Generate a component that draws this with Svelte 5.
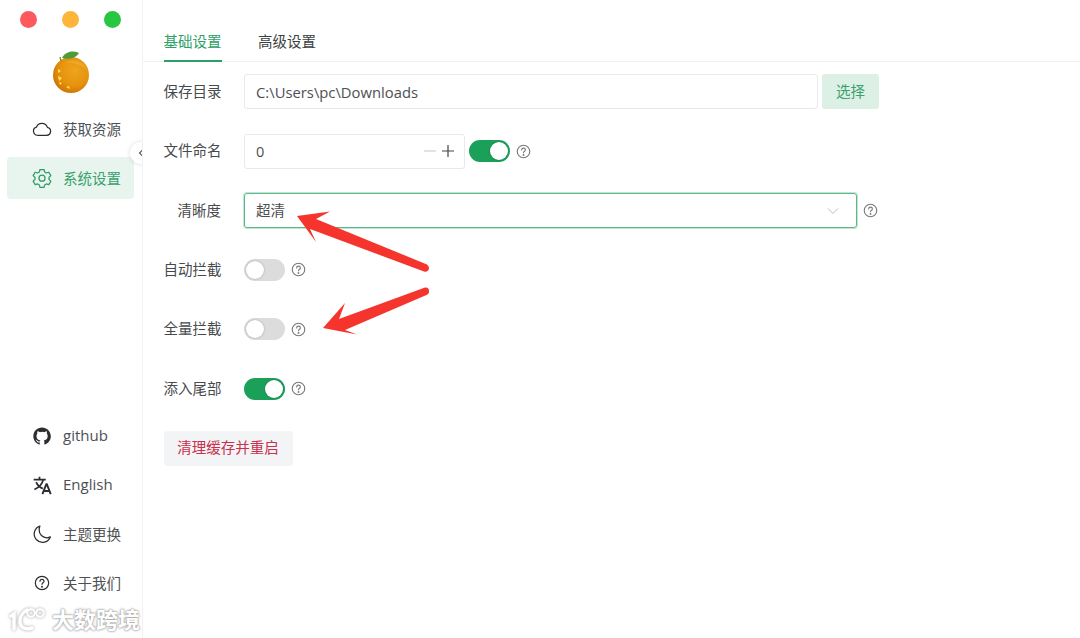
<script>
  const topMenu = [
    { label: '获取资源', icon: 'cloud' },
    { label: '系统设置', icon: 'gear', active: true }
  ];
  const bottomMenu = [
    { label: 'github', icon: 'github', latin: true },
    { label: 'English', icon: 'lang', latin: true },
    { label: '主题更换', icon: 'moon' },
    { label: '关于我们', icon: 'help' }
  ];
</script>

{#snippet icon(name)}
  {#if name === 'cloud'}
    <svg class="ico" viewBox="0 0 24 24" fill="none" stroke="currentColor" stroke-width="1.5"><path d="M6.500 19.500h11a4.800 4.800 0 0 0 1-9.500A7 7 0 0 0 5.400 9.700 5 5 0 0 0 6.500 19.500z" stroke-linejoin="round"/></svg>
  {:else if name === 'gear'}
    <svg class="ico" viewBox="0 0 24 24" fill="none" stroke="currentColor" stroke-width="1.500" stroke-linejoin="round"><path d="M9.600 1.800h4.800l.8 3 2 1.200 3-.9 2.400 4.100-2.200 2.200v2.300l2.200 2.200-2.400 4.100-3-.9-2 1.200-.8 3H9.600l-.8-3-2-1.200-3 .9-2.400-4.100 2.200-2.200v-2.300L1.400 9.200l2.400-4.100 3 .9 2-1.200z"/><circle cx="12" cy="12.200" r="3.600"/></svg>
  {:else if name === 'github'}
    <svg class="ico" viewBox="0 0 24 24" fill="currentColor"><path d="M12 1.800C6.200 1.800 1.600 6.400 1.600 12.200c0 4.600 3 8.500 7.100 9.900.5.100.7-.2.700-.5v-1.900c-2.900.6-3.500-1.200-3.500-1.200-.5-1.200-1.200-1.500-1.200-1.500-.9-.6.100-.6.100-.6 1 .1 1.600 1.100 1.600 1.100.9 1.600 2.400 1.100 3 .9.100-.7.400-1.100.7-1.400-2.300-.3-4.700-1.200-4.700-5.100 0-1.100.4-2 1.100-2.800-.1-.3-.5-1.300.1-2.800 0 0 .9-.3 2.900 1.100a10 10 0 0 1 5.200 0c2-1.400 2.900-1.100 2.900-1.100.6 1.500.2 2.500.1 2.800.7.800 1.100 1.700 1.100 2.800 0 4-2.400 4.800-4.700 5.100.4.300.7 1 .7 1.900v2.800c0 .3.2.6.7.5 4.100-1.400 7.100-5.300 7.100-9.900C22.400 6.400 17.800 1.800 12 1.800z"/></svg>
  {:else if name === 'lang'}
    <svg class="ico" viewBox="0 0 24 24" fill="none" stroke="currentColor" stroke-width="2.100"><path d="M2 5.500h14.500M9 2v3.500M13.500 5.500c-1 4.800-4.900 9.200-10.600 12M5 8.500c1.500 3.600 4.600 6.400 8 7.800"/><path d="M12.500 23l4.700-12h.6l4.700 12M14 19.200h7" stroke-width="2.300"/></svg>
  {:else if name === 'moon'}
    <svg class="ico" viewBox="0 0 24 24" fill="none" stroke="currentColor" stroke-width="1.500" stroke-linejoin="round"><path d="M9.500 2.500A10 10 0 1 0 22 15.500c-1.300.7-2.500 1-4 1A9.200 9.200 0 0 1 8.600 7.200c0-1.700.3-3.200.9-4.700z"/></svg>
  {:else if name === 'help'}
    <svg class="ico small" viewBox="0 0 24 24" fill="none" stroke="currentColor" stroke-width="1.800" stroke-linecap="round"><circle cx="12" cy="12" r="10"/><path d="M9 9.500a3 3 0 0 1 6 0c0 2-3 2.300-3 4.500"/><circle cx="12" cy="17.500" r=".6" fill="currentColor"/></svg>
  {/if}
{/snippet}

{#snippet hint()}
  <svg class="hint" viewBox="0 0 24 24" fill="none" stroke="currentColor" stroke-width="1.800" stroke-linecap="round"><circle cx="12" cy="12" r="10"/><path d="M9 9.500a3 3 0 0 1 6 0c0 2-3 2.300-3 4.500"/><circle cx="12" cy="17.500" r=".6" fill="currentColor"/></svg>
{/snippet}

<div class="app">
  <aside class="side">
    <div class="lights">
      <span class="light red"></span>
      <span class="light amber"></span>
      <span class="light green"></span>
    </div>
    <svg class="logo" viewBox="0 0 40 46" aria-hidden="true">
      <defs>
        <radialGradient id="orange" cx="0.6" cy="0.38" r="0.7">
          <stop offset="0" stop-color="#eea51e"/>
          <stop offset="0.6" stop-color="#e6920c"/>
          <stop offset="1" stop-color="#c96f05"/>
        </radialGradient>
      </defs>
      <circle cx="20" cy="26" r="18" fill="url(#orange)"/>
      <path d="M13 14c8-5 21-3 23 8-4-6-14-9-23-8z" fill="#f6bf45" opacity=".35"/>
      <path d="M11 9c3-6 10-8 17-5-3 5-10 7-17 5z" fill="#4f9a3a"/>
      <path d="M10 12l-1-4" stroke="#7d8a3a" stroke-width="1.300"/>
      <path d="M7 20l3 2-3 2zM7 27l4 2-3 3zM8 33l3 1-2 2zM15 38l3-1 1 3z" fill="#fbe35a"/>
    </svg>
    <nav class="menu top">
      {#each topMenu as item}
        <div class="item" class:active={item.active}>
          {@render icon(item.icon)}
          <span>{item.label}</span>
        </div>
      {/each}
    </nav>
    <span class="collapse">
      <svg viewBox="0 0 8 10" width="6" height="8" fill="none" stroke="#555" stroke-width="1.600"><path d="M6 1L2 5l4 4"/></svg>
    </span>
    <nav class="menu bottom">
      {#each bottomMenu as item}
        <div class="item" class:wide={item.latin}>
          {@render icon(item.icon)}
          <span>{item.label}</span>
        </div>
      {/each}
    </nav>
  </aside>

  <main class="main">
    <div class="tabs">
      <div class="tab current">基础设置</div>
      <div class="tab">高级设置</div>
    </div>
    <div class="form">
      <div class="row">
        <label>保存目录</label>
        <div class="input grow"><span class="latin">C:\Users\pc\Downloads</span></div>
        <button class="pick">选择</button>
      </div>
      <div class="row">
        <label>文件命名</label>
        <div class="input number">
          <span>0</span>
          <span class="steps">
            <svg viewBox="0 0 14 14" width="14" height="14" stroke="#c8cacc" stroke-width="1.100"><path d="M1 7h12"/></svg>
            <svg viewBox="0 0 14 14" width="14" height="14" stroke="#444" stroke-width="1.200"><path d="M1 7h12M7 1v12"/></svg>
          </span>
        </div>
        <span class="switch on"></span>
        {@render hint()}
      </div>
      <div class="row">
        <label>清晰度</label>
        <div class="input select">
          <span class="cjk">超清</span>
          <svg viewBox="0 0 12 8" width="12" height="8" fill="none" stroke="#b9bcbf" stroke-width="1"><path d="M1 1.500l5 5 5-5"/></svg>
        </div>
        {@render hint()}
      </div>
      <div class="row">
        <label>自动拦截</label>
        <span class="switch"></span>
        {@render hint()}
      </div>
      <div class="row">
        <label>全量拦截</label>
        <span class="switch"></span>
        {@render hint()}
      </div>
      <div class="row">
        <label>添入尾部</label>
        <span class="switch on"></span>
        {@render hint()}
      </div>
      <div class="row">
        <button class="clear">清理缓存并重启</button>
      </div>
    </div>
  </main>

  <svg class="arrows" viewBox="0 0 1080 638" aria-hidden="true">
    <path d="M297 216L330 211.500 316 219 427 264.500Q430 267 428.500 270 427 272.500 424 271.500L310 229 316 242z" fill="#f5352d"/>
    <path d="M323 328L345 303 339 319 425 287.500Q428.500 287 429 290.500 429.500 293.500 426.500 295L345 330 357 334.500z" fill="#f5352d"/>
  </svg>

  <div class="mark">
    <svg viewBox="0 0 45 28" width="45" height="28" fill="none" stroke="#fff" stroke-width="3.500" stroke-linecap="round">
      <path d="M4 12l3-2v15" />
      <path d="M20 6c-5 3-8 8-7 13 1 5 6 7 12 5" />
      <circle cx="24" cy="9" r="3.800" stroke-width="2"/>
      <circle cx="33" cy="9" r="3.800" stroke-width="2"/>
    </svg>
    <span>大数跨境</span>
  </div>
</div>

<style>
  :global(body) {
    margin: 0;
    background: #fff;
    font-family: "Open Sans", "Noto Sans CJK SC", sans-serif;
    color: #474a4d;
  }
  .app {
    position: relative;
    display: flex;
    width: 1080px;
    height: 638px;
    overflow: hidden;
    background: #fff;
    font-size: 14.5px;
  }
  .side {
    position: relative;
    box-sizing: border-box;
    flex: 0 0 143px;
    height: 638px;
    padding: 11px 8px 0 7px;
    display: flex;
    flex-direction: column;
    border-right: 1px solid #eff1f2;
    overflow: hidden;
  }
  .lights {
    display: flex;
    gap: 25px;
    padding-left: 13px;
    height: 17px;
  }
  .light {
    width: 17px;
    height: 17px;
    border-radius: 50%;
  }
  .red { background: #fc5a5d; }
  .amber { background: #fdb53a; }
  .green { background: #29c641; }
  .logo {
    display: block;
    width: 40px;
    height: 46px;
    margin: 21px 0 0 44px;
    flex: none;
  }
  .menu {
    display: flex;
    flex-direction: column;
    gap: 7px;
  }
  .top { margin-top: 13px; }
  .bottom { margin-top: auto; margin-bottom: 34px; }
  .item {
    display: flex;
    align-items: center;
    gap: 11px;
    height: 42px;
    padding-left: 25px;
    border-radius: 4px;
    color: #4d5053;
  }
  .item span { padding-bottom: 2px; }
  .item.wide { font-size: 15px; }
  .item.active {
    background: #e7f5ee;
    color: #3aa06c;
  }
  .ico {
    width: 20px;
    height: 20px;
    flex: none;
    color: #2b2d30;
  }
  .ico.small {
    width: 16px;
    height: 16px;
    margin: 0 2px;
  }
  .active .ico { color: #2f9a63; }
  .collapse {
    position: absolute;
    left: 130px;
    top: 142px;
    width: 22px;
    height: 22px;
    border-radius: 50%;
    background: #fff;
    box-shadow: 0 0 5px rgba(0, 0, 0, 0.14);
    display: flex;
    align-items: center;
    justify-content: center;
  }
  .main {
    flex: 1;
    min-width: 0;
  }
  .tabs {
    box-sizing: border-box;
    display: flex;
    gap: 36.5px;
    height: 62px;
    padding-left: 20.5px;
    border-bottom: 1px solid #eff1f2;
  }
  .tab {
    box-sizing: border-box;
    height: 62px;
    padding-top: 31px;
    line-height: 22px;
    color: #3c3f42;
  }
  .tab.current {
    color: #2f9f68;
    border-bottom: 2px solid #2f9f68;
  }
  .form {
    display: flex;
    flex-direction: column;
    gap: 24.4px;
    padding: 12.3px 0 0 20.5px;
  }
  .row {
    display: flex;
    align-items: center;
    height: 35px;
  }
  label {
    width: 57.5px;
    margin-right: 23px;
    padding-bottom: 3px;
    text-align: right;
    white-space: nowrap;
  }
  .input {
    box-sizing: border-box;
    display: flex;
    align-items: center;
    height: 35px;
    padding: 0 11px;
    border: 1px solid #e7e9ea;
    border-radius: 3px;
    color: #4d5053;
  }
  .latin { padding-top: 1px; font-size: 14.8px; }
  .cjk { padding-bottom: 2px; }
  .grow { width: 574px; }
  .number {
    width: 221px;
    justify-content: space-between;
    padding-right: 9px;
  }
  .steps {
    display: flex;
    gap: 4px;
  }
  .select {
    width: 613px;
    justify-content: space-between;
    border-color: #5cb888;
    box-shadow: 0 0 0 1px #c3e6d3;
    padding-right: 17px;
  }
  .pick {
    width: 57px;
    height: 35px;
    margin-left: 4px;
    padding: 0 0 2px;
    border: 0;
    border-radius: 3px;
    background: #dcf0e5;
    color: #3aa06c;
    font: inherit;
  }
  .switch {
    position: relative;
    width: 41px;
    height: 22px;
    border-radius: 11px;
    background: #dcdcdc;
    flex: none;
  }
  .switch::after {
    content: "";
    position: absolute;
    left: 2px;
    top: 2px;
    width: 18px;
    height: 18px;
    border-radius: 50%;
    background: #fff;
    box-shadow: 0 0 2px rgba(0, 0, 0, 0.3);
  }
  .switch.on { background: #1ba05a; }
  .switch.on::after { left: 21px; }
  .number + .switch { margin-left: 4px; }
  .hint {
    width: 15px;
    height: 15px;
    margin-left: 6px;
    color: #77797c;
    flex: none;
  }
  .clear {
    width: 129px;
    height: 35px;
    padding: 0 0 3px;
    border: 0;
    border-radius: 3px;
    background: #f3f4f5;
    color: #c9304f;
    font: inherit;
  }
  .arrows {
    position: absolute;
    inset: 0;
    width: 1080px;
    height: 638px;
    pointer-events: none;
  }
  .mark {
    position: absolute;
    left: 7px;
    top: 603px;
    display: flex;
    align-items: center;
    height: 30px;
    color: #fff;
    font-size: 22px;
    font-weight: 700;
    text-shadow: 0 0 2px #a8a8a8, 0 0 2px #a8a8a8, 0 0 3px #bbb;
  }
  .mark svg {
    filter: drop-shadow(0 0 1.5px #a0a0a0);
    flex: none;
  }
</style>
